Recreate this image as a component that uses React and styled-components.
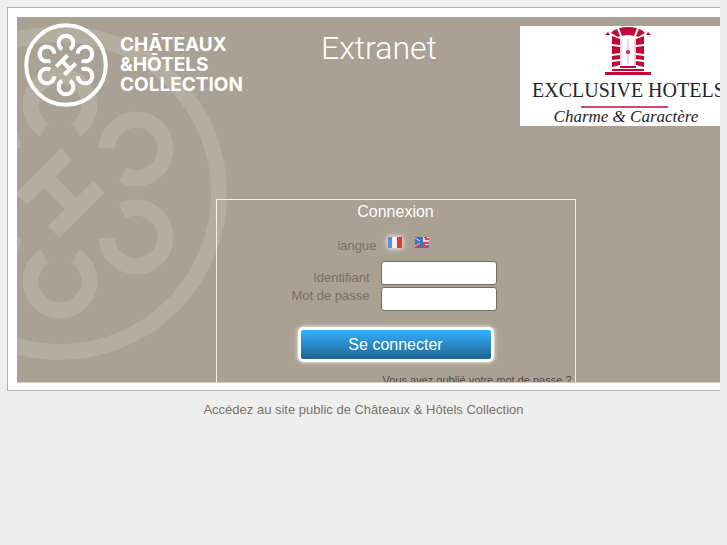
import React from "react"
import styled, { createGlobalStyle } from 'styled-components'

const petals = [0, 60, 120, 180, 240, 300]

const Emblem = ({ color }) => (
  <g fill="none" stroke={color} strokeWidth="16">
    <circle r="159" />
    {petals.map(angle => (
      <path
        key={angle}
        transform={`rotate(${angle}) translate(0 88)`}
        d="M-15.5 -24.9A29.3 29.3 0 1 0 15.5 -24.9"
      />
    ))}
    <path transform="rotate(45)" d="M-23 -32V32M23 -32V32M-23 0H23" />
  </g>
)

const Door = () => (
  <DoorDrawing width="46" height="48" viewBox="0 0 46 48" aria-hidden="true">
    <g fill="#c00a35">
      <path d="M17 9L14 1Q23 -1 32 1L29 9Q23 7 17 9Z" />
      <path d="M12 2L15 9L13 10L6 6Q8 3 12 2Z" />
      <path d="M34 2L31 9L33 10L40 6Q38 3 34 2Z" />
      <path d="M0 8L3 5L5 8ZM41 8L43 5L46 8Z" />
      <path d="M7 9L15 12V18L7 17ZM7 19L15 20V26L7 27ZM7 29L15 28V32L7 33ZM7 35L15 34V38L7 40Z" />
      <path d="M39 9L31 12V18L39 17ZM39 19L31 20V26L39 27ZM39 29L31 28V32L39 33ZM39 35L31 34V38L39 40Z" />
      <path d="M15 39H31V41H15ZM7 42H39V44H7ZM0 45H46V48H0Z" />
      <circle cx="23" cy="25" r="2" />
    </g>
    <path d="M16 12V38M30 12V38M23 12V37" stroke="#dc8d9f" strokeWidth="0.7" />
  </DoorDrawing>
)

const FrenchFlag = () => (
  <svg width="14" height="11" viewBox="0 0 14 11" aria-hidden="true">
    <path fill="#5b8fdb" d="M0 0H5V11H0Z" />
    <path fill="#eef0f6" d="M4 0H9V11H4Z" />
    <path fill="#e5372f" d="M9 0H14V11H9Z" />
  </svg>
)

const EnglishFlag = () => (
  <svg width="14" height="11" viewBox="0 0 14 11" aria-hidden="true">
    <path fill="#2f78cc" d="M0 0H14V11H0Z" />
    <path fill="#e4d6e0" d="M8 0H14V11H8Z" />
    <path stroke="#e4d6e0" d="M0 9L5 6M0 1L5 4" />
    <path stroke="#e0444c" strokeWidth="2" d="M1 10L7 6M9 5V11M8 6H14M10 2H14M12 8V11" />
    <path fill="#2f78cc" d="M9 0H12V1H9ZM10 8H11V11H10ZM13 8H14V11H13Z" />
  </svg>
)

const App = () => (
  <Page>
    <GlobalStyle />
    <Frame>
      <Panel>
        <Watermark width="211" height="344" viewBox="-43 -176 211 344" aria-hidden="true">
          <Emblem color="#b5ada0" />
        </Watermark>
        <Header>
          <Brand>
            <svg width="84" height="84" viewBox="-168 -168 336 336" aria-hidden="true">
              <Emblem color="#fff" />
            </svg>
            <BrandName>
              <span>CHĀTEAUX</span>
              <span>&amp;HŌTELS</span>
              <span>COLLECTION</span>
            </BrandName>
          </Brand>
          <Title>Extranet</Title>
          <Partner>
            <Door />
            <PartnerName>EXCLUSIVE HOTELS</PartnerName>
            <PartnerRule />
            <PartnerMotto>Charme &amp; Caractère</PartnerMotto>
          </Partner>
        </Header>
        <Login onSubmit={e => e.preventDefault()}>
          <LoginTitle>Connexion</LoginTitle>
          <Languages>
            <LanguageLabel>langue</LanguageLabel>
            <Flag type="button" aria-label="Français" $active><FrenchFlag /></Flag>
            <Flag type="button" aria-label="English"><EnglishFlag /></Flag>
          </Languages>
          <Fields>
            <Labels>
              <label htmlFor="login">Identifiant</label>
              <label htmlFor="password">Mot de passe</label>
            </Labels>
            <Inputs>
              <Input id="login" type="text" />
              <Input id="password" type="password" />
            </Inputs>
          </Fields>
          <Submit type="submit">Se connecter</Submit>
          <Forgotten href="#">Vous avez oublié votre mot de passe ?</Forgotten>
        </Login>
      </Panel>
    </Frame>
    <PublicLink href="#">Accédez au site public de Châteaux &amp; Hôtels Collection</PublicLink>
  </Page>
)

const GlobalStyle = createGlobalStyle`
  * {
    box-sizing: border-box;
  }
  body {
    margin: 0;
    background: #eee;
    color: #7c7168;
    font: 13px/18px "Liberation Sans", Arial, sans-serif;
  }
`

const Page = styled.div`
  display: flex;
  flex-direction: column;
  padding: 7px;
`

const Frame = styled.div`
  padding: 9px 0 7px 9px;
  border: 1px solid #b9afa7;
  border-right: 0;
  background: #fff;
`

const Panel = styled.main`
  position: relative;
  height: 366px;
  overflow: hidden;
  border-bottom: 1px solid #d5cfca;
  background: #aaa094;
`

const Watermark = styled.svg`
  position: absolute;
  top: 0;
  left: 0;
`

const Header = styled.header`
  position: relative;
  display: grid;
  grid-template-columns: 304px 1fr 200px;
  align-items: start;
  height: 182px;
`

const Brand = styled.div`
  display: flex;
  gap: 12px;
  padding: 6px 0 0 7px;
`

const BrandName = styled.div`
  display: flex;
  flex-direction: column;
  padding-top: 12px;
  color: #fff;
  font: 700 19px/20px Inter, sans-serif;
`

const Title = styled.h1`
  margin: 0;
  padding-top: 12px;
  color: #fff;
  font: 300 32px/38px Roboto, sans-serif;
`

const Partner = styled.div`
  display: flex;
  flex-direction: column;
  align-items: center;
  height: 100px;
  margin-top: 9px;
  padding: 1px 0 0 12px;
  overflow: hidden;
  background: #fff;
  color: #26232a;
  white-space: nowrap;
`

const DoorDrawing = styled.svg`
  flex: none;
  margin-left: 4px;
`

const PartnerName = styled.div`
  align-self: flex-start;
  font: 20px/30px "Liberation Serif", serif;
`

const PartnerRule = styled.div`
  flex: none;
  width: 87px;
  height: 2px;
  margin: 1px 4px 0 0;
  background: #d4476b;
`

const PartnerMotto = styled.div`
  font: italic 17px/18px "Liberation Serif", serif;
`

const Login = styled.form`
  position: relative;
  display: flex;
  flex-direction: column;
  width: 360px;
  margin-left: calc(50% - 153px);
  padding-bottom: 16px;
  border: 1px solid #f2efec;
`

const LoginTitle = styled.h2`
  margin: 0;
  color: #fff;
  font-size: 16px;
  font-weight: 400;
  line-height: 24px;
  text-align: center;
`

const Languages = styled.div`
  display: flex;
  align-items: flex-start;
  gap: 12px;
  padding-top: 13px;
`

const LanguageLabel = styled.span`
  width: 160px;
  text-align: right;
`

const Flag = styled.button`
  display: flex;
  margin: 0 1px 0 -1px;
  padding: 0;
  border: 0;
  background: none;
  box-shadow: ${props => props.$active ? '0 0 5px 1px #ece8e4' : 'none'};

  & + & {
    margin-left: 0;
  }
`

const Fields = styled.div`
  display: flex;
  gap: 11px;
  padding-top: 6px;
`

const Labels = styled.div`
  display: flex;
  flex-direction: column;
  width: 153px;
  padding-top: 8px;
  text-align: right;
`

const Inputs = styled.div`
  display: flex;
  flex-direction: column;
  gap: 2px;
`

const Input = styled.input`
  width: 116px;
  height: 24px;
  padding: 2px 4px;
  border: 1px solid #766c63;
  border-radius: 3px;
  background: #fff;
  font: inherit;
`

const Submit = styled.button`
  align-self: center;
  width: 196px;
  height: 35px;
  margin-top: 16px;
  border: 3px solid #fff;
  border-radius: 5px;
  background: linear-gradient(#33b0ff, #1f658f);
  box-shadow: 0 0 4px #fff;
  color: #fff;
  font: 16px/24px "Liberation Sans", Arial, sans-serif;
`

const Forgotten = styled.a`
  align-self: flex-end;
  margin-top: 9px;
  padding-right: 3px;
  color: #554d47;
  font-size: 11px;
  text-decoration: none;
`

const PublicLink = styled.a`
  align-self: center;
  padding-top: 10px;
  color: #7c7168;
  text-decoration: none;
`

export default App
